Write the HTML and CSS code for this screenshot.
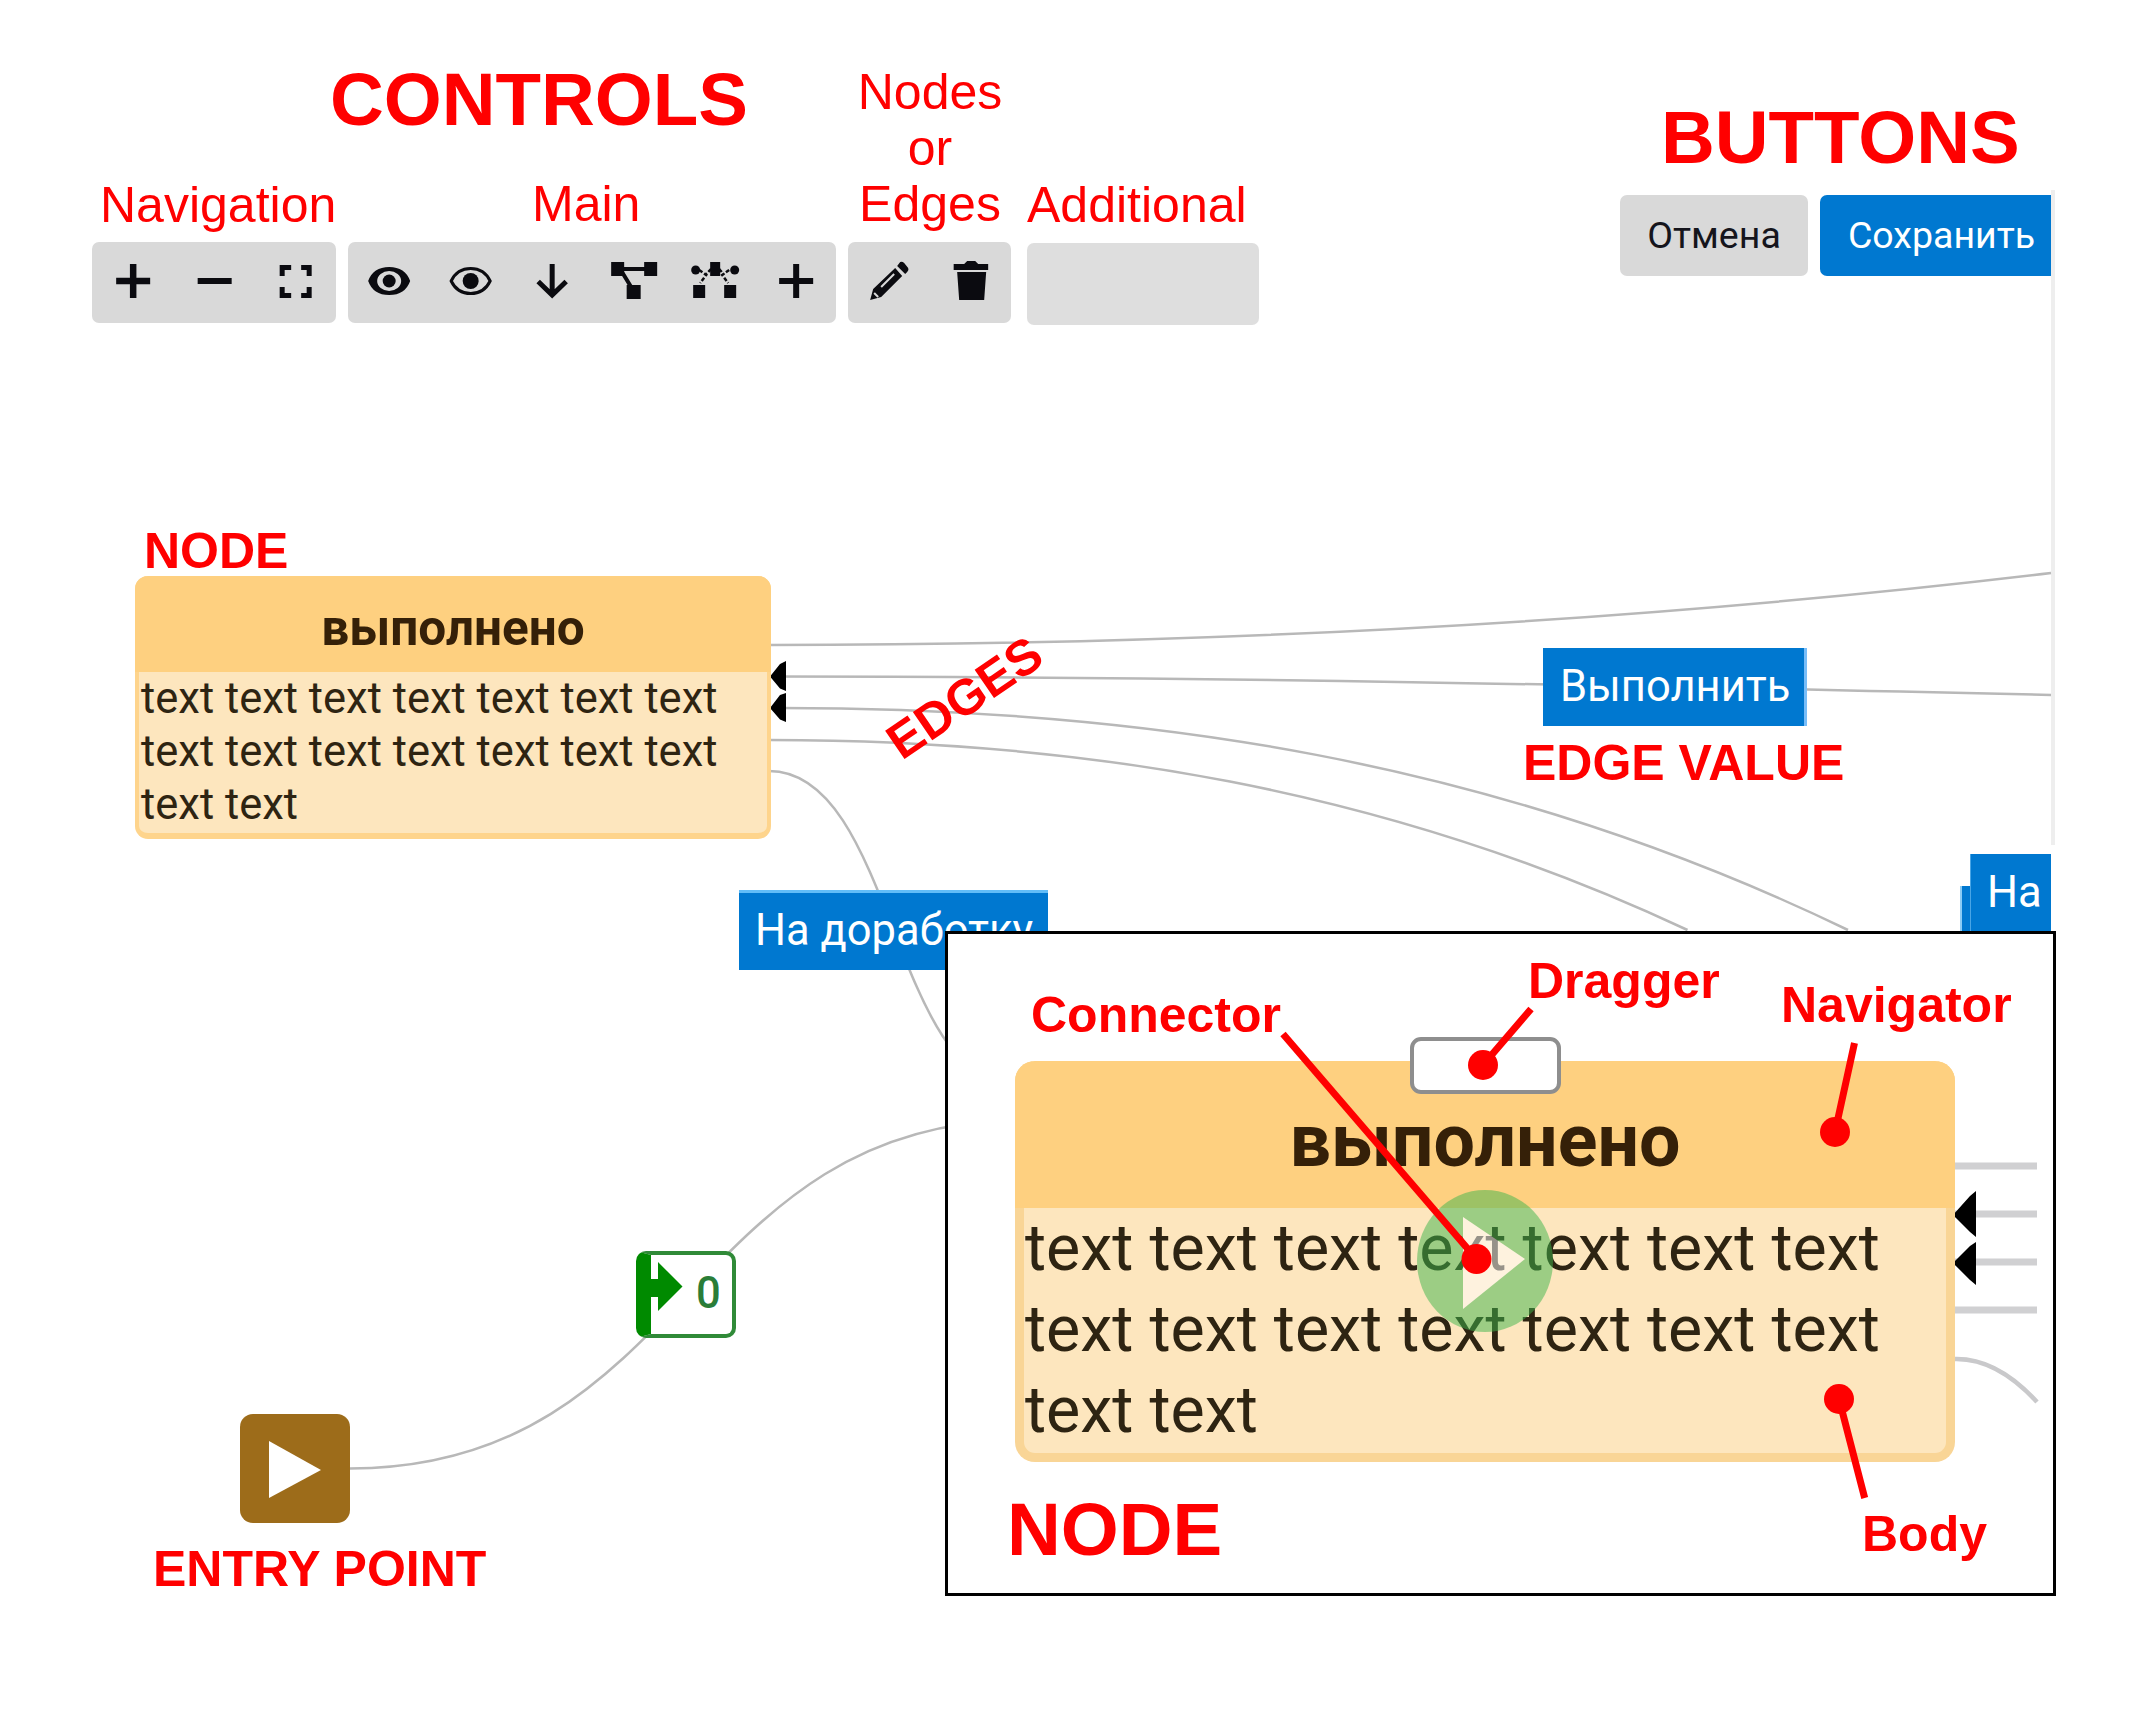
FILE: index.html
```html
<!DOCTYPE html>
<html lang="ru">
<head>
<meta charset="utf-8">
<title>Graph editor overview</title>
<link rel="stylesheet" href="styles.css">
</head>
<body>
<main class="canvas">
  <header class="toolbar">
    <div class="group">
      <svg class="icon" viewBox="0 0 81 81"><path d="M24 39H58M41 22V56" stroke-width="6.500"/></svg>
      <svg class="icon" viewBox="0 0 81 81"><path d="M24.500 39H58.500" stroke-width="6"/></svg>
      <svg class="icon" viewBox="0 0 81 81"><path d="M27 34V25.500H36M46 25.500H54V34M54 45V53.500H46M36 53.500H27V45" stroke-width="5"/></svg>
    </div>
    <div class="group">
      <svg class="icon" viewBox="0 0 81 81"><path class="solid" fill-rule="evenodd" d="M20 39Q25 25 41 25T62 39Q57 53 41 53T20 39ZM41 29A12 10 0 1 0 41 49A12 10 0 1 0 41 29Z"/><circle class="solid" cx="41" cy="39" r="6.500"/></svg>
      <svg class="icon" viewBox="0 0 81 81"><path d="M22 39Q28 26.500 41.500 26.500T61 39Q55 51.500 41.500 51.500T22 39Z" stroke-width="3"/><circle class="solid" cx="41.500" cy="39" r="8"/></svg>
      <svg class="icon" viewBox="0 0 81 81"><path d="M41 22V54M27 39.500L41 53L55 39.500" stroke-width="5"/></svg>
      <svg class="icon" viewBox="0 0 81 81"><path d="M26 27H57M28 27L42 50" stroke-width="4"/><path class="solid" d="M19 20h13v14H19zM52 20h13v14H52zM34.500 43h14v14h-14z"/></svg>
      <svg class="icon" viewBox="0 0 81 81"><path d="M26 28L33 33L27 41M38 27L32 33M56 28L49 33L55 41M46 27L51 33" stroke-width="2.500" stroke-dasharray="4 2"/><circle class="solid" cx="22.500" cy="28" r="4.500"/><circle class="solid" cx="61.500" cy="28" r="4.500"/><path class="solid" d="M37 20h10v14H37zM20 43h12v13H20zM51 43h12v13H51z"/></svg>
      <svg class="icon" viewBox="0 0 81 81"><path d="M24 39H58M41 22V56" stroke-width="6"/></svg>
    </div>
    <div class="group">
      <svg class="icon" viewBox="0 0 81 81"><path class="solid" d="M22 58L25 47L47 26L54 34L33 55ZM49 24L52 20Q54 19 56 21L60 26Q61 28 59 30L57 32Z"/><path class="nib" d="M26 51L30 55M33 45L46 32" stroke-width="2"/></svg>
      <svg class="icon" viewBox="0 0 81 81"><path class="solid" d="M24.500 22H35L38 19H46L49 22H59V28H24.500ZM28 30H57L55 58H30Z"/></svg>
    </div>
    <div class="group group-extra"></div>
    <div class="buttons">
      <button class="btn">Отмена</button>
      <button class="btn btn-primary">Сохранить</button>
    </div>
  </header>

  <svg class="edges" viewBox="0 0 2149 1730">
    <path d="M2053 190V845" stroke="#eeeeee" stroke-width="4"/>
    <path d="M769 645C1199 645 1625 624 2051 573"/>
    <path d="M771 676.500C1199 676.500 1625 685.500 2051 695"/>
    <path d="M780 708C1140 708 1494 759 1848 930"/>
    <path d="M769 740C1078 740 1383 787.400 1687.500 930"/>
    <path d="M769 771C893 771 893 1085 1015 1085"/>
    <path d="M350 1468.500C688 1468.500 688 1120 1024 1120"/>
    <path class="arrow" d="M770 676.500L780 664L786 661V691L780 688.500ZM770 708L780 695L786 693V722L780 719.500Z"/>
  </svg>

  <section class="node node-small">
    <h2 class="node-title">выполнено</h2>
    <p class="node-body">text text text text text text text text text text text text text text text text</p>
  </section>

  <div class="edge-value value-rework">На доработку</div>
  <div class="edge-value value-run">Выполнить</div>
  <div class="edge-value value-behind"></div>
  <div class="edge-value value-cut">На</div>

  <div class="entry"><svg viewBox="0 0 110 109"><path d="M29 27V84L81 56Z" fill="#fff"/></svg></div>
  <div class="order"><svg class="order-arrow" viewBox="0 0 50 87"><path d="M14 28H22V11L46.500 35.500L22 60V46H14Z" fill="#008a00"/></svg><span>0</span></div>

  <section class="inset">
    <svg class="inset-edges" viewBox="945 931 1111 665">
      <path d="M1953 1166H2037M1953 1214H2037M1953 1262H2037M1953 1310H2037" stroke="#d0d0d2" stroke-width="7"/>
      <path d="M1953 1359Q1996 1357 2037 1402" stroke="#c9c9cb" stroke-width="4.500"/>
      <path class="arrow" d="M1953 1215L1970 1196L1976 1191V1237L1970 1232ZM1953 1263L1970 1246L1976 1242V1285L1970 1280Z"/>
    </svg>
    <div class="node node-large">
      <h2 class="node-title">выполнено</h2>
      <p class="node-body">text text text text text text text text text text text text text text text text</p>
      <div class="dragger"></div>
      <svg class="connector" viewBox="0 0 136 142"><ellipse cx="68" cy="71" rx="68" ry="71" fill="#3eb64c"/><path d="M46 27V119L108 69Z" fill="#fff"/></svg>
    </div>
  </section>

  <svg class="pointers" viewBox="0 0 2149 1730">
    <path d="M1283 1034L1476.500 1259M1531 1009L1483 1065M1854.500 1043L1835 1132M1864.700 1498L1839 1399"/>
    <circle cx="1476.500" cy="1259" r="15"/><circle cx="1483" cy="1065" r="15"/>
    <circle cx="1835" cy="1132" r="15"/><circle cx="1839" cy="1399" r="15"/>
  </svg>

  <div class="note big controls-note">CONTROLS</div>
  <div class="note big buttons-note">BUTTONS</div>
  <div class="note navigation-note">Navigation</div>
  <div class="note main-note">Main</div>
  <div class="note items-note">Nodes<br>or<br>Edges</div>
  <div class="note additional-note">Additional</div>
  <div class="note bold node-note">NODE</div>
  <div class="note bold edges-note">EDGES</div>
  <div class="note bold value-note">EDGE VALUE</div>
  <div class="note bold entry-note">ENTRY POINT</div>
  <div class="note bold connector-note">Connector</div>
  <div class="note bold dragger-note">Dragger</div>
  <div class="note bold navigator-note">Navigator</div>
  <div class="note bold body-note">Body</div>
  <div class="note big inset-note">NODE</div>
</main>
</body>
</html>
```
FILE: styles.css
```css
* { box-sizing: border-box; }
body { margin: 0; background: #fff; font-family: Roboto, "Liberation Sans", sans-serif; }
.canvas { position: relative; width: 2149px; height: 1730px; overflow: hidden; background: #fff; }

.toolbar { display: flex; align-items: flex-start; gap: 12px; padding: 195px 98px 0 92px; }
.group { display: flex; height: 81px; margin-top: 47px; border-radius: 7px; background: #d9d9d9; }
.group-extra { width: 232px; height: 82px; margin: 48px 0 0 4px; background: #dedede; }
.icon { width: 81.33px; height: 81px; fill: none; stroke: #0b0b10; }
.icon .solid { fill: #0b0b10; stroke: none; }
.icon .nib { stroke: #d9d9d9; }
.buttons { display: flex; gap: 12px; margin-left: auto; }
.btn { width: 188px; height: 81px; padding: 0; border: 0; border-radius: 7px; background: #d9d9d9; color: #15151c; font: 37.5px/79px Roboto, sans-serif; }
.btn-primary { width: 231px; padding-left: 12px; border-radius: 7px 0 0 7px; background: #0078d0; color: #fff; }

.edges, .pointers { position: absolute; left: 0; top: 0; width: 2149px; height: 1730px; fill: none; stroke: #b8b8b8; stroke-width: 2.5; }
.arrow { fill: #000; stroke: none; }
.pointers { stroke: #f00; stroke-width: 7; }
.pointers circle { fill: #f00; stroke: none; }

.node { position: absolute; background: #fde6be; color: #2e2412; }
.node-title, .node-body { margin: 0; }
.node-title { background: #fed080; text-align: center; color: #352008; font-weight: 700; }
.node-body { font-weight: 400; }
.node-small { left: 135px; top: 576px; width: 636px; height: 263px; border: 4px solid #fed48c; border-top-width: 0; border-bottom-width: 6px; border-radius: 13px; }
.node-small .node-title { height: 96px; margin: 0 -4px; padding-top: 25px; font-size: 49.5px; line-height: 54px; border-radius: 13px 13px 0 0; }
.node-small .node-body { width: 600px; padding: 0 0 0 2px; font-size: 43.5px; line-height: 53px; }
.node-large { left: 67px; top: 127px; width: 940px; height: 401px; border: 9px solid #f9d596; border-top: 0; border-radius: 20px; }
.node-large .node-title { height: 147px; margin: 0 -9px; padding-top: 42px; font-size: 73.5px; line-height: 76px; border-radius: 20px 20px 0 0; }
.node-large .node-body { width: 900px; padding: 0 0 0 1px; font-size: 64.5px; line-height: 81px; }
.dragger { position: absolute; left: 386px; top: -24px; width: 151px; height: 57px; border: 4px solid #8e8e8e; border-radius: 11px; background: #fff; }
.connector { position: absolute; left: 393px; top: 129px; width: 136px; height: 142px; opacity: .5; }

.edge-value { position: absolute; height: 78px; background: #0078d0; color: #fff; font-size: 43.5px; line-height: 77px; white-space: nowrap; }
.value-rework { left: 739px; top: 890px; width: 309px; height: 80px; padding-left: 16px; border-top: 3px solid #62bdf8; line-height: 76px; }
.value-run { left: 1543px; top: 648px; width: 264px; padding-left: 17px; border-right: 3px solid #78bdf8; }
.value-behind { left: 1960px; top: 886px; width: 60px; border-left: 2px solid #8bcbf5; }
.value-cut { left: 1970px; top: 854px; width: 81px; padding-left: 16px; border-left: 1px solid #49a5e6; }

.entry { position: absolute; left: 240px; top: 1414px; width: 110px; height: 109px; border-radius: 13px; background: #9d6c1a; }
.entry svg { display: block; }
.order { position: absolute; left: 636px; top: 1251px; width: 100px; height: 87px; border: 4px solid #308a38; border-left: 15px solid #008a00; border-radius: 10px; background: #fff; color: #2a7d38; font-size: 43.5px; font-weight: 500; line-height: 77px; padding-left: 45px; }
.order-arrow { position: absolute; left: -15px; top: -4px; width: 50px; height: 87px; }

.inset { position: absolute; left: 945px; top: 931px; width: 1111px; height: 665px; border: 3px solid #000; background: #fff; }
.inset-edges { position: absolute; left: -3px; top: -3px; width: 1111px; height: 665px; fill: none; }

.note { position: absolute; color: #f00; font: 50px/50px "Liberation Sans", Arial, sans-serif; white-space: nowrap; }
.note.bold { font-weight: 700; }
.note.big { font-size: 74.5px; line-height: 75px; font-weight: 700; }
.controls-note { left: 330px; top: 62px; }
.buttons-note { left: 1661px; top: 100px; }
.navigation-note { left: 100px; top: 180px; }
.main-note { left: 532px; top: 179px; }
.note.items-note { left: 857px; top: 64px; width: 146px; line-height: 56px; text-align: center; }
.additional-note { left: 1027px; top: 180px; }
.node-note { left: 144px; top: 526px; }
.edges-note { left: 902px; top: 718.7px; transform-origin: 0 42.3px; transform: rotate(-34.3deg); }
.value-note { left: 1523px; top: 738px; }
.entry-note { left: 153px; top: 1544px; }
.connector-note { left: 1031px; top: 990px; }
.dragger-note { left: 1528px; top: 956px; }
.navigator-note { left: 1781px; top: 980px; }
.body-note { left: 1862px; top: 1509px; }
.inset-note { left: 1007px; top: 1492px; }
```
